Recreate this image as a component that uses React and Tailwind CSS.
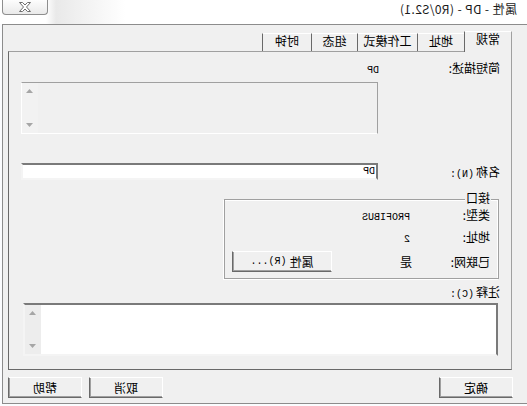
import React from "react";

// Small monospace run used for the Latin parts of labels and values
function Mono({ children, className = "" }) {
  return (
    <span className={"font-['Liberation_Mono',monospace] text-[10px] leading-[8px] " + className}>
      {children}
    </span>
  );
}

function Arrow({ up }) {
  return (
    <svg width="7" height="4" viewBox="0 0 7 4">
      <path d={up ? "M0 4 L3.5 0 L7 4 Z" : "M0 0 L3.5 4 L7 0 Z"} fill="#a6a6a6" />
    </svg>
  );
}

function VScroll({ className = "" }) {
  return (
    <div className={"flex w-[16px] flex-col items-center justify-between py-[6px] " + className}>
      <Arrow up />
      <Arrow />
    </div>
  );
}

function Button({ children, className = "" }) {
  return (
    <div
      className={
        "flex h-[21px] items-center justify-center border border-t-white border-l-white border-r-[#696969] border-b-[#696969] bg-[#f0f0f0] shadow-[inset_-1px_-1px_0_#a0a0a0] " +
        className
      }
    >
      {children}
    </div>
  );
}

function Tab({ children, selected, className = "" }) {
  return selected ? (
    <div
      className={
        "relative z-10 -mb-px flex h-[21px] justify-center border-t border-l border-r border-t-white border-l-[#a0a0a0] border-r-[#696969] bg-[#f0f0f0] " +
        className
      }
    >
      {children}
    </div>
  ) : (
    <div
      className={
        "flex h-[18px] justify-center border-t border-r border-t-white border-r-[#696969] " +
        className
      }
    >
      {children}
    </div>
  );
}

export default function App() {
  return (
    <div className="relative h-[406px] w-[527px] -scale-x-100 overflow-hidden bg-[#fbfcfe] font-['Noto_Sans_CJK_SC',sans-serif] text-[12px] leading-[14px] text-black">
      {/* caption */}
      <div className="flex h-[24px] items-start justify-between bg-[linear-gradient(to_left,#ffffff_0px,#ffffff_46px,#e9e9e9_56px,#ffffff_125px)]">
        <div className="pl-[10px] pt-[2px] tracking-[0.4px] text-[#1a1a1a]">属性 - DP - (R0/S2.1)</div>
        <div className="mr-[2px] flex h-[15px] w-[46px] items-center justify-center rounded-b-[4px] border border-t-0 border-[#8e8e8e] bg-[linear-gradient(#fdfdfd,#eaeaea)]">
          <svg width="12" height="10" viewBox="0 0 12 10">
            <polygon
              points="0.5,0.5 3.5,0.5 6,3 8.5,0.5 11.5,0.5 7.5,5 11.5,9.5 8.5,9.5 6,7 3.5,9.5 0.5,9.5 4.5,5"
              fill="#ffffff"
              stroke="#6f6f6f"
              strokeWidth="1"
            />
          </svg>
        </div>
      </div>

      {/* client area */}
      <div className="mr-[2px] flex h-[380px] flex-col border-t border-r border-b border-[#8c8c8c] bg-[#f0f0f0]">
        {/* tab strip */}
        <div className="ml-[15px] mt-[6px] flex h-[20px] items-end">
          <Tab selected className="w-[48px]">常规</Tab>
          <Tab className="w-[47px]">地址</Tab>
          <Tab className="w-[60px]">工作模式</Tab>
          <Tab className="w-[46px]">组态</Tab>
          <Tab className="w-[49px]">时钟</Tab>
        </div>

        {/* tab page */}
        <div className="ml-[15px] flex h-[319px] w-[504px] flex-col border border-t-[#a0a0a0] border-l-[#a0a0a0] border-r-[#696969] border-b-[#696969] pl-[11px] pt-[9px]">
          <div className="flex h-[14px] items-baseline">
            <div className="w-[121px]">简短描述:</div>
            <Mono>DP</Mono>
          </div>

          <div className="ml-[122px] mt-[7px] flex h-[52px] w-[357px] justify-end border border-t-[#a0a0a0] border-l-[#a0a0a0] border-r-white border-b-white bg-[#f0f0f0]">
            <VScroll className="bg-[#f2f2f2]" />
          </div>

          <div className="mt-[29px] flex h-[17px] items-center">
            <div className="w-[122px]">
              名称<Mono className="ml-[2px]">(N):</Mono>
            </div>
            <div className="flex h-[17px] w-[357px] items-center border-2 border-t-[#7a7a7a] border-l-[#7a7a7a] border-r-[#f4f4f4] border-b-[#f4f4f4] bg-white pl-px">
              <Mono>DP</Mono>
            </div>
          </div>

          {/* interface group */}
          <div className="relative ml-px mt-[19px] h-[80px] w-[275px] border border-[#a0a0a0] pl-[8px] pt-[8px] shadow-[1px_1px_0_#ffffff,inset_1px_1px_0_#ffffff]">
            <div className="absolute left-[7px] top-[-9px] bg-[#f0f0f0] px-px">接口</div>
            <div className="flex h-[14px] items-baseline">
              <div className="w-[80px]">类型:</div>
              <Mono>PROFIBUS</Mono>
            </div>
            <div className="mt-[8px] flex h-[14px] items-baseline">
              <div className="w-[80px]">地址:</div>
              <Mono>2</Mono>
            </div>
            <div className="mt-[7px] flex h-[21px] items-center">
              <div className="w-[78px]">已联网:</div>
              <div>是</div>
              <Button className="ml-auto mr-[7px] w-[100px]">
                属性<Mono className="ml-[3px]">(R)...</Mono>
              </Button>
            </div>
          </div>

          <div className="mt-[6px]">
            注释<Mono className="ml-[2px]">(C):</Mono>
          </div>

          <div className="ml-[2px] mt-[4px] flex h-[53px] w-[475px] justify-end border-2 border-t-[#7a7a7a] border-l-[#7a7a7a] border-r-[#f4f4f4] border-b-[#f4f4f4] bg-white">
            <VScroll className="bg-[#ededed]" />
          </div>
        </div>

        {/* dialog buttons */}
        <div className="mt-[7px] flex">
          <Button className="ml-[14px] w-[74px]">确定</Button>
          <Button className="ml-auto w-[74px]">取消</Button>
          <Button className="ml-[7px] mr-[5px] w-[74px]">帮助</Button>
        </div>
      </div>
    </div>
  );
}
